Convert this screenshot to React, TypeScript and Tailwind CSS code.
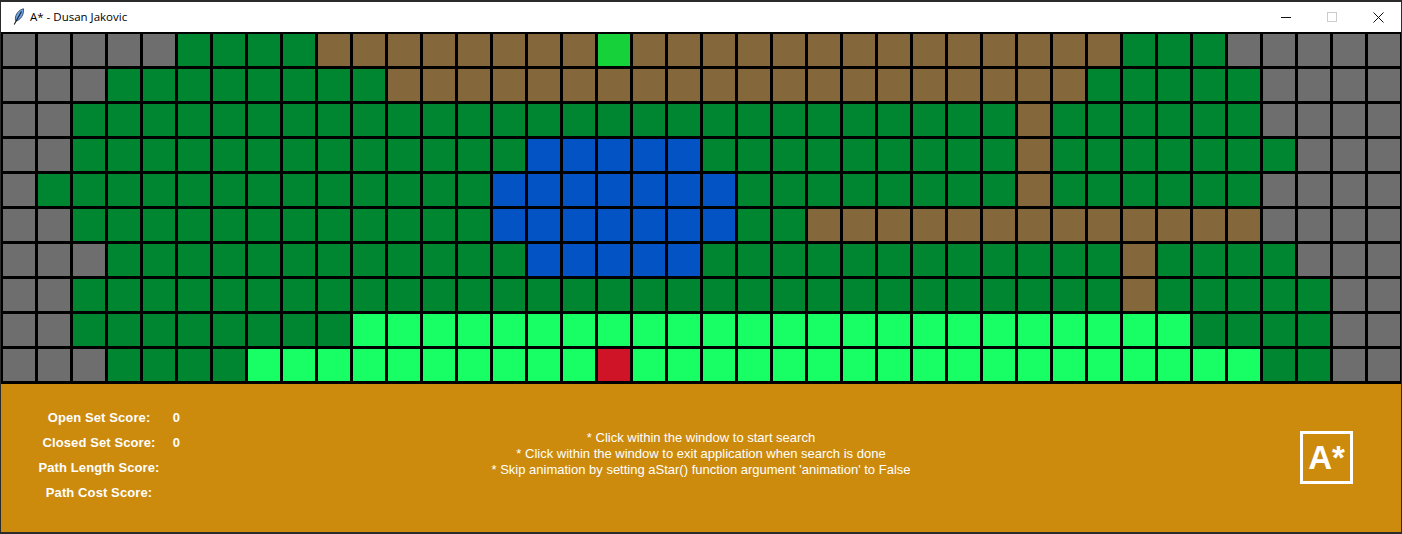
const rows: [string, number][][] = [
  [['g', 5], ['f', 4], ['b', 8], ['s', 1], ['b', 14], ['f', 3], ['g', 5]],
  [['g', 3], ['f', 8], ['b', 20], ['f', 5], ['g', 4]],
  [['g', 2], ['f', 27], ['b', 1], ['f', 6], ['g', 4]],
  [['g', 2], ['f', 13], ['w', 5], ['f', 9], ['b', 1], ['f', 7], ['g', 3]],
  [['g', 1], ['f', 13], ['w', 7], ['f', 8], ['b', 1], ['f', 6], ['g', 4]],
  [['g', 2], ['f', 12], ['w', 7], ['f', 2], ['b', 13], ['g', 4]],
  [['g', 3], ['f', 12], ['w', 5], ['f', 12], ['b', 1], ['f', 4], ['g', 3]],
  [['g', 2], ['f', 30], ['b', 1], ['f', 5], ['g', 2]],
  [['g', 2], ['f', 8], ['l', 24], ['f', 4], ['g', 2]],
  [['g', 3], ['f', 4], ['l', 10], ['e', 1], ['l', 18], ['f', 2], ['g', 2]],
];

const cellColors: Record<string, string> = {
  g: 'bg-[#6e6e6e]',
  f: 'bg-[#008631]',
  b: 'bg-[#84673a]',
  w: 'bg-[#0353c4]',
  l: 'bg-[#18ff66]',
  s: 'bg-[#17d13a]',
  e: 'bg-[#ce1426]',
};

const cells = rows.flatMap(row => row.flatMap(([kind, count]) => Array<string>(count).fill(kind)));

const scores = [
  { label: 'Open Set Score:', value: '0' },
  { label: 'Closed Set Score:', value: '0' },
  { label: 'Path Length Score:', value: '' },
  { label: 'Path Cost Score:', value: '' },
];

function Feather() {
  return (
    <svg width="12" height="18" viewBox="0 0 12 18" className="shrink-0">
      <path d="M10.5 0.8 C7 1.5 3.5 4.5 2.5 9 C2.2 10.5 2.3 12 2.8 13.2 C6 12.5 9 9.5 10 6 C10.6 4 10.8 2.2 10.5 0.8 Z" fill="#6ea4e6" stroke="#2b3a4d" strokeWidth="0.8" />
      <path d="M8.5 3.5 L1.2 16.5" stroke="#10161e" strokeWidth="1.1" fill="none" />
    </svg>
  );
}

export default function App() {
  return (
    <div className="w-[1402px] h-[534px] overflow-hidden flex flex-col bg-[#2b2b2b] pt-[2px] pb-[2px] px-px font-['Liberation_Sans',sans-serif]">
      <div className="h-[30px] shrink-0 bg-white flex items-center pl-3">
        <Feather />
        <span className="ml-[5px] text-[11.5px] text-black font-['Open_Sans',sans-serif]">A* - Dusan Jakovic</span>
        <div className="ml-auto flex items-center pr-[17px]">
          <svg width="11" height="11" viewBox="0 0 11 11" className="mr-[35px]">
            <path d="M0 5.5 H10" stroke="#111" strokeWidth="1" />
          </svg>
          <svg width="11" height="11" viewBox="0 0 11 11" className="mr-[35px]">
            <rect x="0.5" y="0.5" width="9" height="9" fill="none" stroke="#cccccc" strokeWidth="1" />
          </svg>
          <svg width="11" height="11" viewBox="0 0 11 11">
            <path d="M0.5 0.5 L10.5 10.5 M10.5 0.5 L0.5 10.5" stroke="#111" strokeWidth="1" />
          </svg>
        </div>
      </div>

      <div className="shrink-0 bg-black pl-[2px] pt-[2px] pb-[3px] grid grid-cols-[repeat(40,32px)] auto-rows-[32px] gap-[3px]">
        {cells.map((kind, idx) => (
          <div key={idx} className={cellColors[kind]} />
        ))}
      </div>

      <div className="flex-1 bg-[#cc8b0d] grid grid-cols-[1fr_auto_1fr] text-white">
        <div className="pl-[37px] pt-[21px]">
          <div className="grid grid-cols-[122px_20px] auto-rows-[25px] items-center text-[13px] font-bold tracking-[0.1px] whitespace-nowrap">
            {scores.map(s => (
              <div key={s.label} className="contents">
                <div className="text-center">{s.label}</div>
                <div className="text-right">{s.value}</div>
              </div>
            ))}
          </div>
        </div>
        <div className="pt-[46px] text-center text-[13px] leading-4 whitespace-nowrap">
          <div>* Click within the window to start search</div>
          <div>* Click within the window to exit application when search is done</div>
          <div>* Skip animation by setting aStar() function argument 'animation' to False</div>
        </div>
        <div className="flex justify-end pt-[47px] pr-[48px]">
          <div className="w-[53px] h-[53px] border-[3px] border-white flex items-center justify-center text-[33px] font-bold leading-none">
            A*
          </div>
        </div>
      </div>
    </div>
  );
}
